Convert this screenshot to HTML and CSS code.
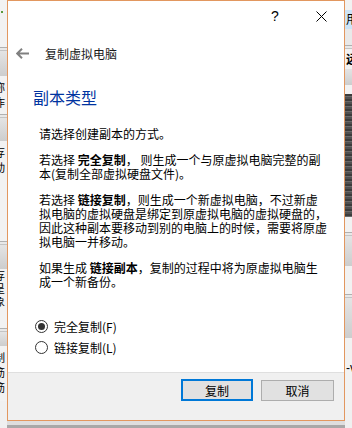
FILE: index.html
```html
<!DOCTYPE html>
<html lang="zh-CN">
<head>
  <meta charset="UTF-8">
  <meta name="viewport" content="width=device-width, initial-scale=1.0">
  <title>复制虚拟电脑</title>
  <link rel="stylesheet" href="styles.css">
</head>
<body>
  <!-- Window behind, left edge -->
  <div class="desk-left">
    <div class="band light tall-a"><span class="dot"></span><span class="frag frag-a">）</span></div>
    <div class="rule"></div>
    <div class="band shade h25"></div>
    <div class="band light h38"><span class="frag">称<br>作</span></div>
    <div class="rule"></div>
    <div class="band shade h23"></div>
    <div class="band light h38"><span class="frag">存<br>动</span></div>
    <div class="band light h62"></div>
    <div class="rule"></div>
    <div class="band shade h24"></div>
    <div class="band light h42"><span class="frag tight">存<br>呈<br>象</span></div>
    <div class="band light h17"></div>
    <div class="rule"></div>
    <div class="band shade h14"></div>
    <div class="band light h55"><span class="frag">制<br>筋<br>筋</span></div>
  </div>

  <div class="middle">
    <div class="dialog">
      <!-- Title bar -->
      <div class="titlebar">
        <button class="cap-btn help">?</button>
        <button class="cap-btn">
          <svg width="11" height="11" viewBox="0 0 11 11"><path d="M0.5 0.5 L10.5 10.5 M10.5 0.5 L0.5 10.5" stroke="#000" stroke-width="1" fill="none"/></svg>
        </button>
      </div>

      <!-- Wizard header -->
      <div class="nav">
        <svg class="back" width="13" height="11" viewBox="0 0 13 11"><path d="M1 5.5 H13 M6 0.8 L1.2 5.5 L6 10.2" stroke="#808080" stroke-width="2" fill="none"/></svg>
        <span class="nav-title">复制虚拟电脑</span>
      </div>

      <div class="content">
        <h2 class="page-title">副本类型</h2>

        <div class="text">
          <p>请选择创建副本的方式。</p>
          <p>若选择 <b>完全复制</b>，&nbsp;则生成一个与原虚拟电脑完整的副<br>本(复制全部虚拟硬盘文件)。</p>
          <p>若选择 <b>链接复制</b>，则生成一个新虚拟电脑，不过新虚<br>拟电脑的虚拟硬盘是绑定到原虚拟电脑的虚拟硬盘的，<br>因此这种副本要移动到别的电脑上的时候，需要将原虚<br>拟电脑一并移动。</p>
          <p>如果生成 <b>链接副本</b>，复制的过程中将为原虚拟电脑生<br>成一个新备份。</p>
        </div>

        <div class="options">
          <label class="option"><input type="radio" name="mode" checked> 完全复制(F)</label>
          <label class="option"><input type="radio" name="mode"> 链接复制(L)</label>
        </div>
      </div>

      <!-- Buttons -->
      <div class="footer">
        <button class="btn default">复制</button>
        <button class="btn">取消</button>
      </div>
    </div>
    <div class="desk-bottom"></div>
  </div>

  <!-- Window behind, right edge -->
  <div class="desk-right">
    <div class="band light h10"></div>
    <div class="band sel h19"><span class="frag-r">用</span></div>
    <div class="band pale h16"></div>
    <div class="rule"></div>
    <div class="band light h20"><span class="frag-r bold">远</span></div>
    <div class="band shade h16"></div>
    <div class="band light h9"></div>
    <div class="band dark h123"></div>
    <div class="band light h15"></div>
    <div class="rule"></div>
    <div class="band shade h30"></div>
    <div class="band light h28"></div>
    <div class="rule"></div>
    <div class="band shade h40"></div>
    <div class="band light h42"><span class="frag-r small">-v</span></div>
    <div class="band light h30"></div>
  </div>
</body>
</html>
```

FILE: styles.css
```css
body {
  margin: 0;
  height: 428px;
  overflow: hidden;
  display: flex;
  background: #e6e6e6;
  font-family: "Noto Sans CJK SC", "Liberation Sans", sans-serif;
  font-size: 12px;
  color: #000;
}

/* Background windows */
.desk-left,
.desk-right {
  width: 7px;
  flex-shrink: 0;
  overflow: hidden;
  display: flex;
  flex-direction: column;
  background: #f0f0f0;
}

.band {
  flex-shrink: 0;
  position: relative;
  overflow: hidden;
}

.light { background: #f2f2f2; }
.pale { background: #e9e9e9; }
.shade { background: linear-gradient(#e4e4e4, #cdcdcd); }
.sel { background: #cce4f7; }
.dark {
  background: repeating-linear-gradient(#3c3c3c 0, #3c3c3c 2px, #6a6a6a 2px, #6a6a6a 3px, #505050 3px, #505050 5px);
}

.rule {
  height: 4px;
  flex-shrink: 0;
  border-top: 1px solid #b0b0b0;
  border-bottom: 1px solid #c4c4c4;
  background: #e8e8e8;
  box-sizing: border-box;
}

.tall-a { height: 47px; }
.h9 { height: 9px; }
.h10 { height: 10px; }
.h14 { height: 14px; }
.h15 { height: 15px; }
.h16 { height: 16px; }
.h17 { height: 17px; }
.h19 { height: 19px; }
.h20 { height: 20px; }
.h23 { height: 23px; }
.h24 { height: 24px; }
.h25 { height: 25px; }
.h28 { height: 28px; }
.h30 { height: 30px; }
.h38 { height: 38px; }
.h40 { height: 40px; }
.h42 { height: 42px; }
.h55 { height: 55px; }
.h62 { height: 62px; }
.h123 { height: 123px; }

.dot {
  display: block;
  width: 2px;
  height: 2px;
  margin: 11px 0 0 1px;
  background: #5a9a3c;
}

.frag {
  display: block;
  margin: 4px 0 0 -6px;
  font-size: 11px;
  line-height: 15px;
  white-space: nowrap;
}

.frag.tight {
  margin-top: 0;
  line-height: 13px;
}

.frag-a {
  margin-top: 10px;
}

.frag-r {
  display: block;
  margin: 1px 0 0 1px;
  line-height: 16px;
  white-space: nowrap;
}

.frag-r.bold { font-weight: bold; margin-top: 2px; }
.frag-r.small { margin-top: 22px; font-family: "Liberation Sans", sans-serif; }

.middle {
  width: 338px;
  flex-shrink: 0;
  display: flex;
  flex-direction: column;
}

.desk-bottom {
  flex: 1;
  background: linear-gradient(#dedede 0, #dedede 4px, #a8a8a8 4px);
}

/* Dialog */
.dialog {
  height: 421px;
  box-sizing: border-box;
  border: 1px solid #e2975f;
  background: #fff;
  display: flex;
  flex-direction: column;
}

.titlebar {
  height: 30px;
  display: flex;
  justify-content: flex-end;
  flex-shrink: 0;
}

.cap-btn {
  width: 46px;
  height: 30px;
  border: none;
  background: transparent;
  padding: 0;
  display: flex;
  align-items: center;
  justify-content: center;
}

.cap-btn.help {
  font-family: "Liberation Sans", sans-serif;
  font-size: 14px;
  color: #000;
}

.nav {
  display: flex;
  align-items: center;
  height: 20px;
  margin-top: 12px;
  padding-left: 8px;
}

.back {
  margin-right: 16px;
}

.nav-title {
  font-size: 12px;
  color: #1a1a1a;
}

.content {
  flex: 1;
  display: flex;
  flex-direction: column;
  padding-left: 25px;
}

.page-title {
  margin: 23px 0 0;
  font-size: 16px;
  font-weight: normal;
  line-height: 22px;
  color: #0033a0;
}

.text {
  margin: 19px 0 0 6px;
  line-height: 14px;
  white-space: nowrap;
}

.text p {
  margin: 0 0 12px;
}

.text b {
  font-weight: bold;
}

.options {
  margin-top: auto;
  margin-bottom: 14px;
  padding-left: 2px;
  display: flex;
  flex-direction: column;
}

.option {
  height: 21px;
  display: flex;
  align-items: center;
  gap: 6px;
}

.option input {
  appearance: none;
  -webkit-appearance: none;
  width: 13px;
  height: 13px;
  margin: 0;
  border: 1px solid #333;
  border-radius: 50%;
  background: #fff;
  display: grid;
  place-content: center;
}

.option input:checked::before {
  content: "";
  width: 7px;
  height: 7px;
  border-radius: 50%;
  background: #333;
}

.footer {
  height: 40px;
  flex-shrink: 0;
  border-top: 1px solid #dfdfdf;
  background: #f0f0f0;
  display: flex;
  justify-content: flex-end;
  align-items: flex-start;
  gap: 8px;
  padding: 7px 10px 0 0;
}

.btn {
  width: 73px;
  height: 21px;
  box-sizing: border-box;
  border: 1px solid #adadad;
  background: #e1e1e1;
  font-family: "Noto Sans CJK SC", sans-serif;
  font-size: 12px;
  padding: 0;
  color: #000;
}

.btn.default {
  width: 72px;
  height: 22px;
  margin-top: -1px;
  border: 2px solid #0078d7;
}
```
